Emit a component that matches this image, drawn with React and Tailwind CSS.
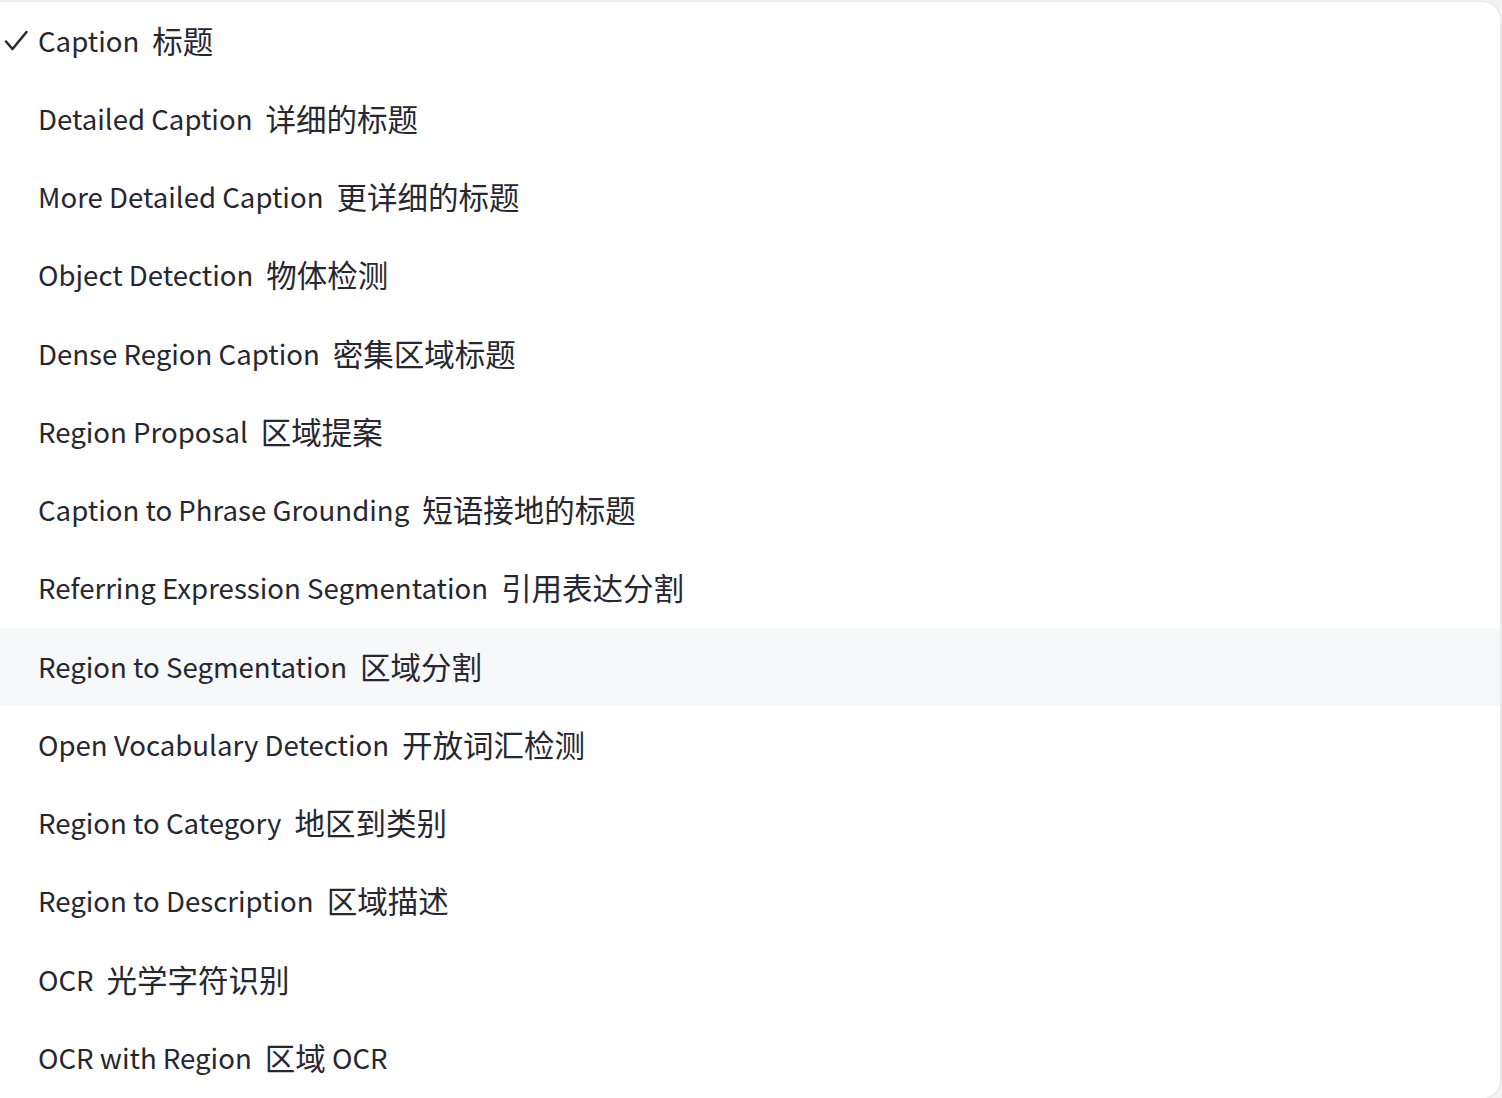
import React from 'react';

const options = [
  ['Caption', '标题'],
  ['Detailed Caption', '详细的标题'],
  ['More Detailed Caption', '更详细的标题'],
  ['Object Detection', '物体检测'],
  ['Dense Region Caption', '密集区域标题'],
  ['Region Proposal', '区域提案'],
  ['Caption to Phrase Grounding', '短语接地的标题'],
  ['Referring Expression Segmentation', '引用表达分割'],
  ['Region to Segmentation', '区域分割'],
  ['Open Vocabulary Detection', '开放词汇检测'],
  ['Region to Category', '地区到类别'],
  ['Region to Description', '区域描述'],
  ['OCR', '光学字符识别'],
  ['OCR with Region', '区域', ' OCR'],
];

const Check = () => (
  <svg width="24" height="22" viewBox="0 0 24 22" fill="none" stroke="#262730" strokeWidth="2.5" strokeLinecap="round" strokeLinejoin="round">
    <polyline points="2,11.5 8.5,19 22.5,2" />
  </svg>
);

export default function App() {
  const selected = 0;
  const hovered = 8;
  return (
    <div className="w-[1502px] h-[1098px] overflow-hidden bg-[#f3f3f5]" style={{ fontFamily: '"Noto Sans CJK SC", "Source Sans Pro", sans-serif' }}>
      <div className="mt-[2px] w-[1500px] h-[1096px] bg-white rounded-r-[18px] shadow-[0_0_3px_rgba(0,0,0,0.12)] overflow-hidden">
        <ul>
          {options.map(([en, zh, tail], i) => (
            <li
              key={en}
              className={`h-[78.25px] pb-[3px] flex items-center text-[#262730] ${i === hovered ? 'bg-[#f7f8fa]' : ''}`}
            >
              <span className="w-[39px] pl-[4px] pt-[3px] flex items-center">{i === selected && <Check />}</span>
              <span className="whitespace-pre text-[27.6px] leading-[40px] -ml-px">{en}</span>
              <span className="ml-[13px] text-[30.5px] leading-[40px]">{zh}</span>
              {tail && <span className="whitespace-pre text-[27.6px] leading-[40px]">{tail}</span>}
            </li>
          ))}
        </ul>
      </div>
    </div>
  );
}
